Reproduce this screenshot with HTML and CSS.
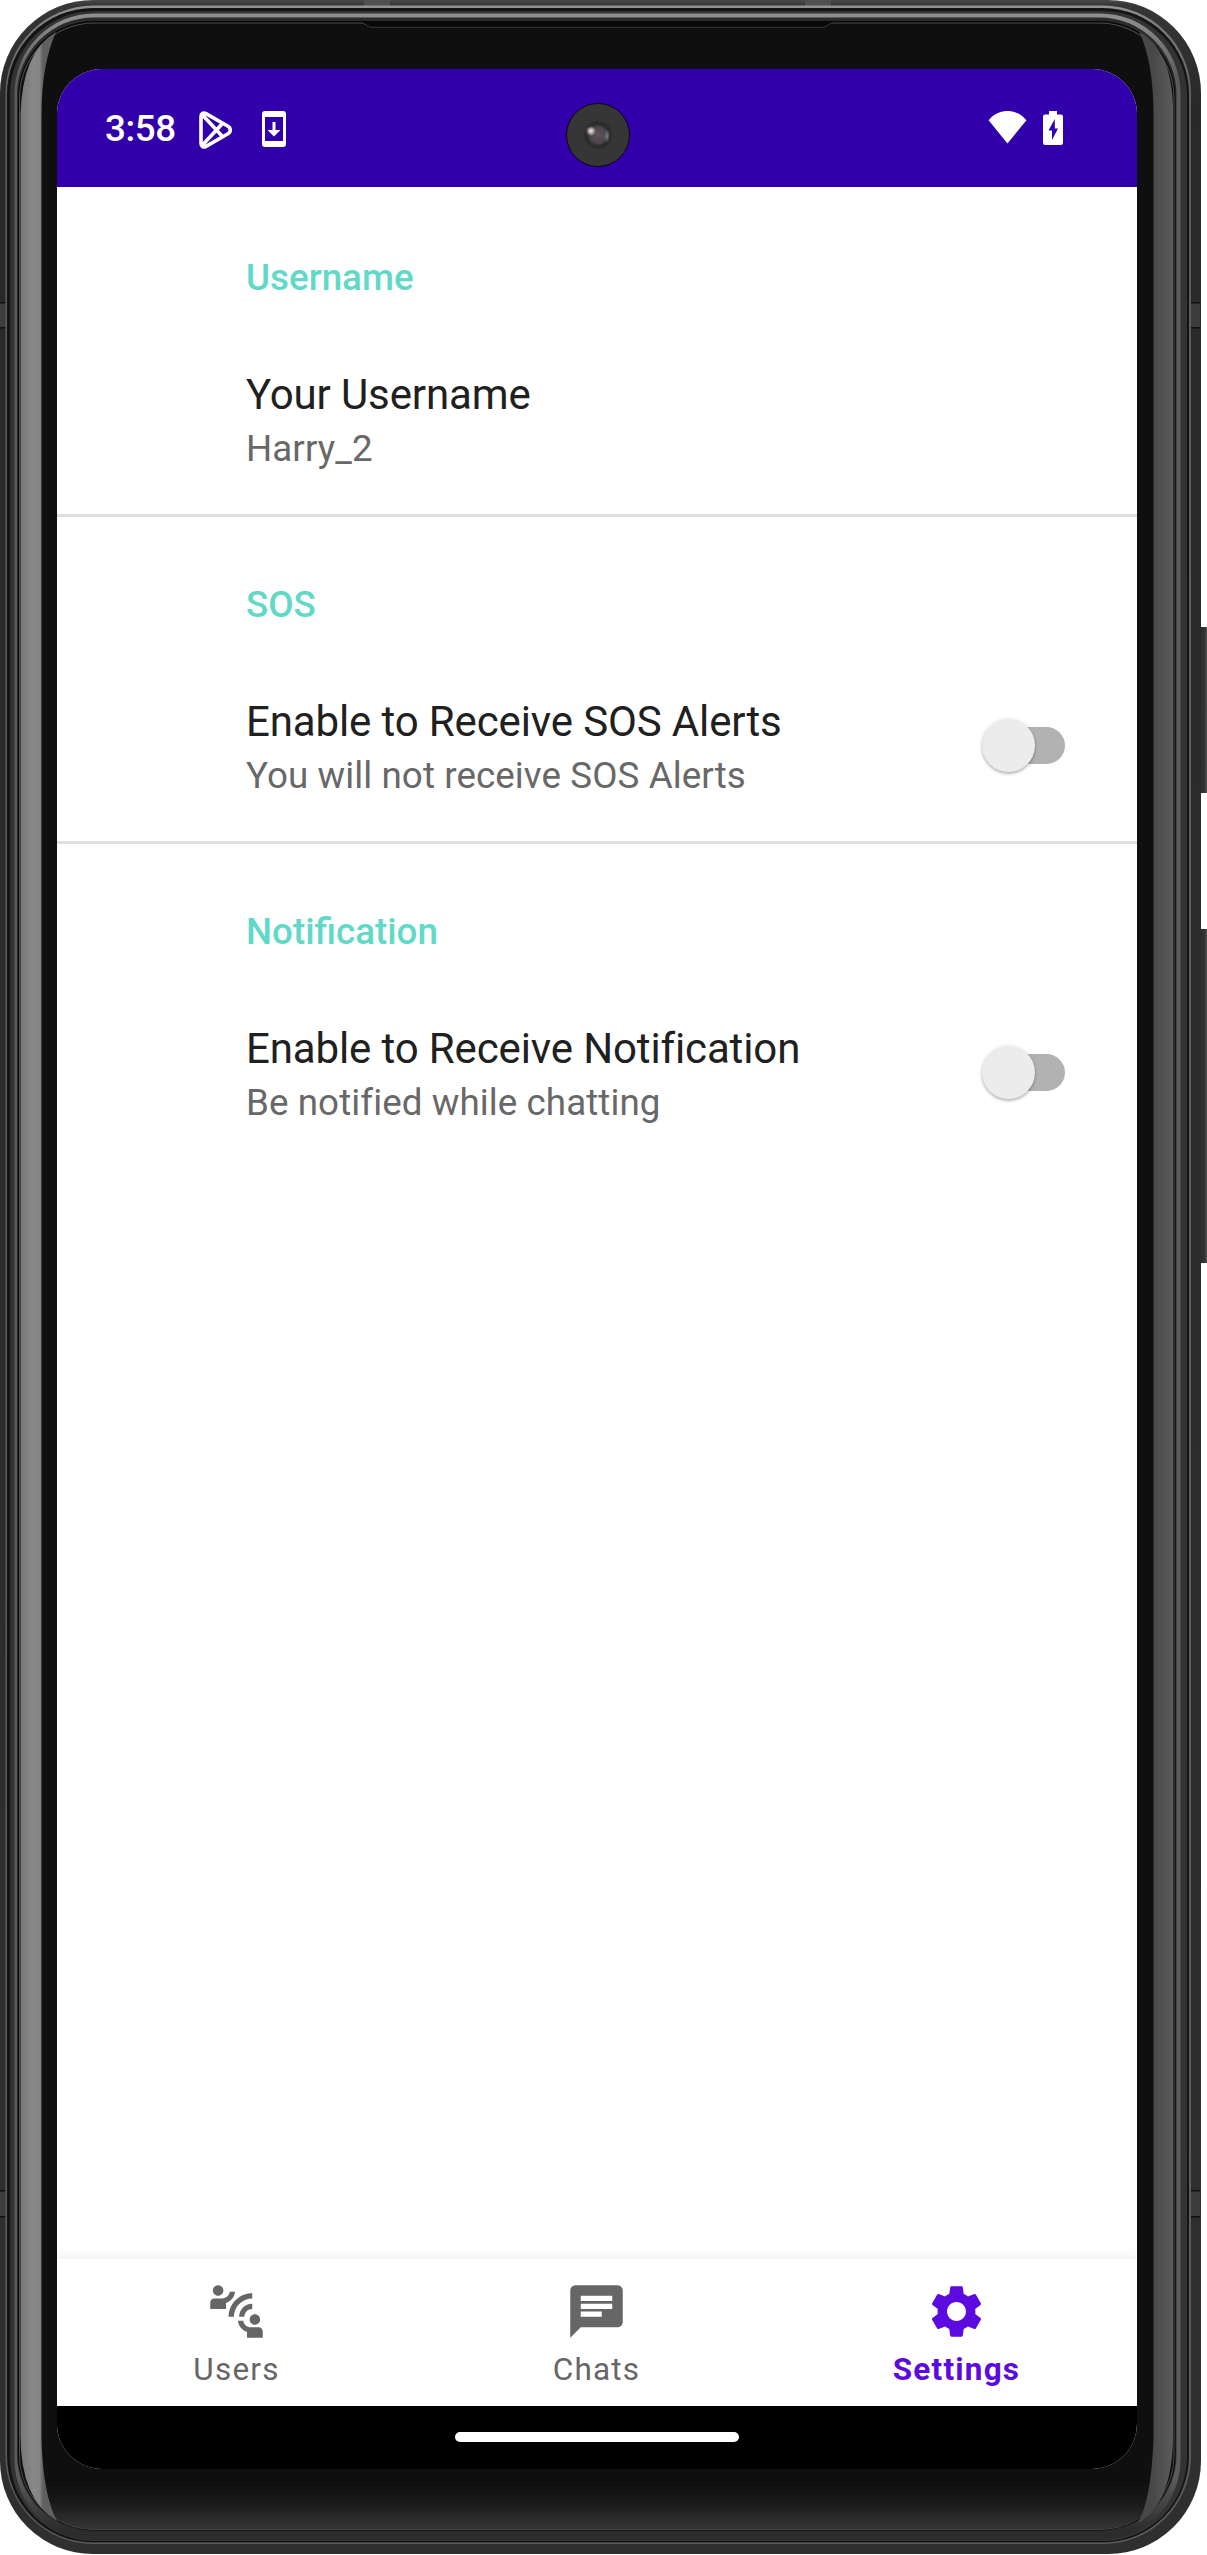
FILE: index.html
```html
<!DOCTYPE html>
<html lang="en">
<head>
<meta charset="utf-8">
<title>Settings</title>
<link rel="stylesheet" href="styles.css">
</head>
<body>
<div class="phone">
  <svg class="frame" viewBox="0 0 1207 2555" aria-hidden="true">
    <defs>
      <linearGradient id="edge" gradientUnits="userSpaceOnUse" x1="0" y1="0" x2="0" y2="2555">
        <stop offset="0" stop-color="#4a4a4a"/><stop offset=".002" stop-color="#363636"/><stop offset=".04" stop-color="#292929"/><stop offset="1" stop-color="#2f2f2f"/>
      </linearGradient>
      <linearGradient id="rim" gradientUnits="userSpaceOnUse" x1="0" y1="0" x2="0" y2="2555">
        <stop offset="0" stop-color="#999"/><stop offset=".012" stop-color="#777"/><stop offset=".04" stop-color="#5c5c5c"/><stop offset="1" stop-color="#5c5c5c"/>
      </linearGradient>
      <linearGradient id="bevel" gradientUnits="userSpaceOnUse" x1="0" y1="0" x2="0" y2="2555">
        <stop offset="0" stop-color="#979797"/><stop offset=".01" stop-color="#888"/><stop offset=".03" stop-color="#5b5b5b"/><stop offset=".97" stop-color="#5b5b5b"/><stop offset=".99" stop-color="#2c2c2c"/><stop offset="1" stop-color="#2c2c2c"/>
      </linearGradient>
      <linearGradient id="glass" gradientUnits="userSpaceOnUse" x1="0" y1="2480" x2="0" y2="2530">
        <stop offset="0" stop-color="#0f0f0f"/><stop offset=".4" stop-color="#171717"/><stop offset="1" stop-color="#363636"/>
      </linearGradient>
      <linearGradient id="glossLeft" gradientUnits="userSpaceOnUse" x1="20" y1="0" x2="43" y2="0">
        <stop offset="0" stop-color="#777"/><stop offset=".6" stop-color="#888"/><stop offset=".85" stop-color="#858585"/><stop offset="1" stop-color="#606060"/>
      </linearGradient>
      <linearGradient id="glossRight" gradientUnits="userSpaceOnUse" x1="1153" y1="0" x2="1174" y2="0">
        <stop offset="0" stop-color="#484848"/><stop offset=".4" stop-color="#515151"/><stop offset="1" stop-color="#5c5c5c"/>
      </linearGradient>
      <linearGradient id="key" x1="0" x2="1" y1="0" y2="0">
        <stop offset="0" stop-color="#252525"/><stop offset=".6" stop-color="#343434"/><stop offset="1" stop-color="#6a6a6a"/>
      </linearGradient>
    </defs>
    <rect x="1198" y="627" width="11" height="166" rx="1.5" fill="url(#key)"/>
    <rect x="1198" y="929" width="11" height="334" rx="1.5" fill="url(#key)"/>
    <rect x="0" y="0" width="1201" height="2554" rx="93" fill="url(#edge)"/>
    <g fill="#3c3c3c">
      <rect x="0" y="303" width="7" height="25"/><rect x="0" y="2191" width="7" height="25"/>
      <rect x="1191" y="303" width="9" height="25"/><rect x="1191" y="2191" width="9" height="25"/>
      <rect x="364" y="0" width="26" height="6" fill="#505050"/><rect x="805" y="0" width="26" height="6" fill="#505050"/>
    </g>
    <g fill="#111">
      <rect x="0" y="302" width="7" height="1.5"/><rect x="0" y="327" width="7" height="1.5"/>
      <rect x="0" y="2190" width="7" height="1.5"/><rect x="0" y="2216" width="7" height="1.5"/>
      <rect x="1191" y="302" width="9" height="1.5"/><rect x="1191" y="327" width="9" height="1.5"/>
      <rect x="1191" y="2190" width="9" height="1.5"/><rect x="1191" y="2216" width="9" height="1.5"/>
    </g>
    <rect x="5.5" y="5.5" width="1185.500" height="2538.500" rx="88" fill="url(#rim)"/>
    <rect x="7" y="8" width="1182" height="2534.500" rx="86" fill="#141414"/>
    <rect x="10" y="11" width="1177" height="2530" rx="84" fill="#333"/>
    <rect x="14.500" y="13.500" width="1166" height="2526.500" rx="80" fill="url(#bevel)"/>
    <rect x="17" y="17.500" width="1159.500" height="2514" rx="77" fill="#2a2a2a"/>
    <rect x="18" y="21" width="1157.500" height="2509.500" rx="76" fill="#060606"/>
    <rect x="19" y="22.500" width="1155.500" height="2507.500" rx="75" fill="#4e4e4e"/>
    <rect x="20" y="23.500" width="1153.500" height="2506" rx="74" fill="url(#glass)"/>
    <path d="M56 32Q41.500 64 41.500 115V2440Q43 2495 57 2521Q20.500 2500 20.500 2435V115Q22 52 56 32Z" fill="url(#glossLeft)"/>
    <path d="M1139 31Q1153.500 62 1153.500 115V2440Q1151 2500 1138 2523Q1173 2503 1173 2435V105Q1171 50 1139 31Z" fill="url(#glossRight)"/>
    <path d="M362 22H833L824 27H371Z" fill="#080808"/>
    <path d="M362 23L371 27.300H824L832 23" fill="none" stroke="#383838"/>
  </svg>
  <main class="screen">
    <header class="status">
      <span class="clock">3:58</span>
      <svg class="play" viewBox="0 0 34 38" aria-hidden="true">
        <path d="M2.500 5.500C2.500 2.500 5 1.200 7.500 2.600L29.500 15.200C32.500 17 32.500 21 29.500 22.800L7.500 35.400C5 36.800 2.500 35.500 2.500 32.500ZM4 4L24 25.500M4 34L24 12.500" fill="none" stroke="#fff" stroke-width="3.600"/>
      </svg>
      <svg class="update" viewBox="0 0 24 36" aria-hidden="true">
        <path fill="#fff" fill-rule="evenodd" d="M3 0H21Q24 0 24 3V33Q24 36 21 36H3Q0 36 0 33V3Q0 0 3 0ZM3 6V30H21V6Z"/>
        <path fill="#fff" d="M10.500 11H13.500V19H18.500L12 25.500L5.500 19H10.500Z"/>
      </svg>
      <span class="grow"></span>
      <svg class="wifi" viewBox="0 0 40 34" aria-hidden="true"><path fill="#fff" d="M.5 9.500C11-3.200 29-3.200 39.500 9.500L20 33.500Z"/></svg>
      <svg class="battery" viewBox="0 0 20 34" aria-hidden="true"><path fill="#fff" fill-rule="evenodd" d="M6 0H14V3.500H18Q20 3.500 20 5.500V32Q20 34 18 34H2Q0 34 0 32V5.500Q0 3.500 2 3.500H6ZM11.800 8L5.500 19.500H9V29L15 17.500H11.800Z"/></svg>
      <span class="camera"></span>
    </header>
    <div class="list">
      <section class="group">
        <h2 class="category">Username</h2>
        <div class="item">
          <div class="copy"><div class="title">Your Username</div><div class="summary">Harry_2</div></div>
        </div>
      </section>
      <section class="group">
        <h2 class="category">SOS</h2>
        <div class="item">
          <div class="copy"><div class="title">Enable to Receive SOS Alerts</div><div class="summary">You will not receive SOS Alerts</div></div>
          <div class="switch"><span class="thumb"></span></div>
        </div>
      </section>
      <section class="group">
        <h2 class="category">Notification</h2>
        <div class="item">
          <div class="copy"><div class="title">Enable to Receive Notification</div><div class="summary">Be notified while chatting</div></div>
          <div class="switch"><span class="thumb"></span></div>
        </div>
      </section>
    </div>
    <nav class="tabs">
      <a class="tab">
        <svg viewBox="0 0 24 24" aria-hidden="true"><path d="M11,14H9c0-4.970,4.030-9,9-9v2C14.130,7,11,10.130,11,14z M18,11V9c-2.760,0-5,2.240-5,5h2C15,12.340,16.340,11,18,11z M7,4c0-1.110-0.890-2-2-2S3,2.890,3,4s0.890,2,2,2S7,5.110,7,4z M11.450,4.500h-2C9.210,5.920,7.990,7,6.500,7h-3C2.670,7,2,7.670,2,8.500V11h6V8.740C9.860,8.150,11.250,6.510,11.450,4.500z M19,17c1.110,0,2-0.890,2-2s-0.890-2-2-2s-2,0.890-2,2S17.890,17,19,17z M20.500,18h-3c-1.490,0-2.710-1.080-2.950-2.500h-2c0.200,2.010,1.590,3.650,3.450,4.240V22h6v-2.500C22,18.670,21.330,18,20.500,18z"/></svg>
        <span>Users</span>
      </a>
      <a class="tab">
        <svg viewBox="0 0 24 24" aria-hidden="true"><path d="M20 2H4c-1.100 0-1.990.9-1.990 2L2 22l4-4h14c1.100 0 2-.9 2-2V4c0-1.100-.9-2-2-2zM6 9h12v2H6V9zm8 5H6v-2h8v2zm4-6H6V6h12v2z"/></svg>
        <span>Chats</span>
      </a>
      <a class="tab active">
        <svg viewBox="0 0 24 24" aria-hidden="true"><path d="M19.140,12.940c0.040-0.300,0.060-0.610,0.060-0.940c0-0.320-0.020-0.640-0.070-0.940l2.030-1.580c0.180-0.140,0.230-0.410,0.120-0.610l-1.920-3.320c-0.120-0.220-0.370-0.290-0.590-0.220l-2.390,0.960c-0.500-0.380-1.030-0.700-1.620-0.940L14.400,2.810c-0.040-0.240-0.240-0.410-0.480-0.410h-3.840c-0.240,0-0.430,0.170-0.470,0.410L9.250,5.350C8.660,5.590,8.120,5.920,7.630,6.290L5.240,5.330c-0.220-0.080-0.470,0-0.590,0.220L2.740,8.870C2.620,9.080,2.660,9.340,2.860,9.480l2.030,1.580C4.840,11.360,4.800,11.690,4.800,12s0.020,0.640,0.070,0.940l-2.030,1.580c-0.180,0.140-0.230,0.410-0.120,0.610l1.920,3.320c0.120,0.220,0.370,0.290,0.590,0.220l2.390-0.960c0.500,0.380,1.030,0.700,1.620,0.940l0.360,2.540c0.050,0.240,0.240,0.410,0.480,0.410h3.840c0.240,0,0.440-0.170,0.470-0.410l0.360-2.540c0.590-0.240,1.130-0.560,1.620-0.940l2.390,0.960c0.220,0.080,0.470,0,0.590-0.220l1.920-3.320c0.120-0.220,0.070-0.470-0.120-0.610L19.140,12.940z M12,15.600c-1.980,0-3.600-1.620-3.600-3.600s1.620-3.600,3.600-3.600s3.600,1.620,3.600,3.600S13.980,15.600,12,15.600z"/></svg>
        <span>Settings</span>
      </a>
    </nav>
    <div class="gesture"><span class="pill"></span></div>
  </main>
</div>
</body>
</html>
```
FILE: styles.css
```css
* { box-sizing: border-box; }

body {
  margin: 0;
  background: #fff;
  font-family: Roboto, "Liberation Sans", sans-serif;
}

.phone {
  position: relative;
  width: 1207px;
  height: 2555px;
  padding: 69px 70px 86px 57px;
  overflow: hidden;
}

.frame {
  position: absolute;
  inset: 0;
  width: 1207px;
  height: 2555px;
}

.screen {
  position: relative;
  display: flex;
  flex-direction: column;
  width: 1080px;
  height: 2400px;
  border-radius: 45px;
  background: #fff;
  overflow: hidden;
}

.status {
  position: relative;
  display: flex;
  flex: none;
  align-items: flex-start;
  height: 118px;
  padding: 42px 74px 0 48px;
  background: #3200aa;
  color: #fff;
}

.clock {
  width: 93px;
  margin-top: -4px;
  font-size: 36.75px;
  font-weight: 500;
  line-height: 43px;
  letter-spacing: -.4px;
}

.play { width: 35px; height: 38px; margin-right: 29px; }
.update { width: 24px; height: 36px; }
.grow { flex: 1; }
.wifi { width: 39px; height: 33px; margin-right: 16px; }
.battery { width: 20px; height: 34px; }

.camera {
  position: absolute;
  left: 509px;
  top: 34px;
  width: 64px;
  height: 64px;
  border: 1.5px solid #080808;
  border-radius: 50%;
  background:
    radial-gradient(circle at 24px 27px, #f4eeee 0, #b8b0b4 2px, rgba(120, 110, 120, 0) 5px),
    radial-gradient(ellipse 3px 7px at 40px 32px, #6d8296 0, rgba(90, 100, 120, 0) 100%),
    radial-gradient(circle at 31px 31px, #5b545b 0, #4b464b 8px, #2b2a2b 11px, #2d2d2d 13px, #363636 15px, #363636 100%);
}

.list { flex: 1; }

.group {
  height: 327px;
  padding: 66px 72px 0 189px;
  border-top: 3px solid #dedede;
}

.group:first-child { border-top-color: transparent; }

.category {
  margin: 0;
  color: #62d9c7;
  font-size: 36.75px;
  font-weight: 500;
  line-height: 43px;
}

.item {
  display: flex;
  align-items: center;
  justify-content: space-between;
  height: 108px;
  margin-top: 65px;
}

.title {
  color: #202020;
  font-size: 42px;
  line-height: 56px;
  letter-spacing: -.13px;
}

.summary {
  margin-top: 4px;
  color: #686868;
  font-size: 36.75px;
  line-height: 43px;
  letter-spacing: .08px;
}

.switch {
  display: flex;
  align-items: center;
  width: 74px;
  height: 37px;
  border-radius: 19px;
  background: #b2b2b2;
}

.thumb {
  flex: none;
  width: 53px;
  height: 53px;
  margin-left: -9px;
  border-radius: 50%;
  background: #ececec;
  box-shadow: 0 2px 3px rgba(0, 0, 0, .24), 0 0 4px rgba(0, 0, 0, .1);
}

.tabs {
  display: flex;
  flex: none;
  height: 147px;
  background: #fff;
  box-shadow: 0 0 14px rgba(0, 0, 0, .1);
}

.tab {
  display: flex;
  flex: 1;
  flex-direction: column;
  align-items: center;
  padding: 21px 1px 0 0;
  color: #666;
  font-size: 31.5px;
  line-height: 37px;
  letter-spacing: 1.2px;
}

.tab svg { width: 63px; height: 63px; margin-bottom: 8px; fill: currentColor; }

.active { color: #5b0ae0; font-weight: 700; }

.gesture {
  display: flex;
  flex: none;
  justify-content: center;
  height: 63px;
  padding-top: 26px;
  background: #000;
}

.pill {
  width: 284px;
  height: 10px;
  border-radius: 5px;
  background: #fff;
}
```
